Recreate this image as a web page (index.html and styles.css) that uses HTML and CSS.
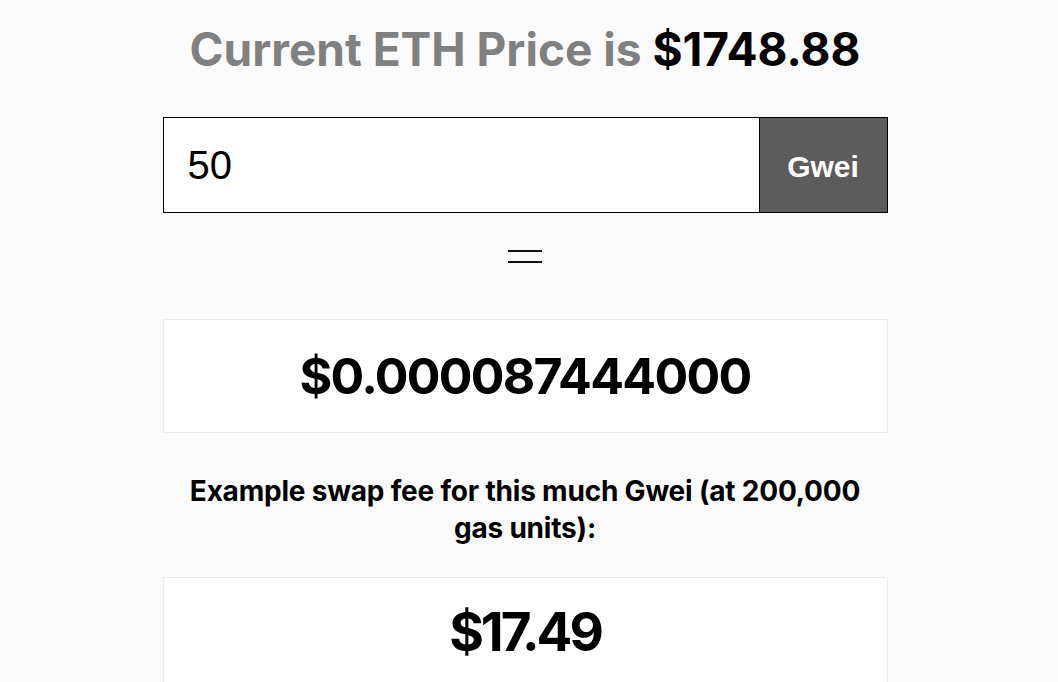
FILE: index.html
```html
<!DOCTYPE html>
<html lang="en">
<head>
    <meta charset="UTF-8">
    <title>Gwei Calculator</title>
    <link rel="stylesheet" href="styles.css">
</head>
<body>

<div class="container">
    <h1 class="title">Current ETH Price is <span class="price">$1748.88</span></h1>

    <form class="gwei-form">
        <input type="text" class="gwei-input" value="50">
        <button type="button" class="unit-button">Gwei</button>
    </form>

    <div class="equals">
        <svg width="34" height="16" viewBox="0 0 34 16">
            <rect x="0" y="1" width="34" height="2" fill="#111"></rect>
            <rect x="0" y="12" width="34" height="2" fill="#111"></rect>
        </svg>
    </div>

    <div class="result-box">
        <div class="result">$0.000087444000</div>
    </div>

    <p class="label">Example swap fee for this much Gwei (at 200,000 gas units):</p>

    <div class="result-box fee-box">
        <div class="result fee">$17.49</div>
    </div>
</div>

</body>
</html>
```

FILE: styles.css
```css
body {
    background-color: #fafafa;
    font-family: Inter, "Liberation Sans", sans-serif;
    margin: 0;
    padding: 0 8px 0 0;
    color: #000;
}

.container {
    width: 725px;
    margin: 0 auto;
    display: flex;
    flex-direction: column;
    align-items: stretch;
}

.title {
    margin: 20px 0 0 0;
    font-size: 46px;
    font-weight: 700;
    color: #808080;
    text-align: center;
    line-height: 58px;
}

.price {
    color: #000;
}

.gwei-form {
    display: flex;
    margin-top: 39px;
    height: 96px;
    border: 1px solid #000;
    box-sizing: border-box;
    background-color: #fff;
}

.gwei-input {
    flex: 1;
    border: none;
    outline: none;
    padding: 0 24px;
    font-family: "Liberation Sans", Arial, sans-serif;
    font-size: 40px;
    color: #000;
    background: #fff;
    min-width: 0;
}

.unit-button {
    width: 128px;
    border: none;
    border-left: 1px solid #000;
    background-color: #5c5c5c;
    color: #fff;
    font-family: "Liberation Sans", Arial, sans-serif;
    font-weight: 700;
    font-size: 30px;
    padding: 4px 0 0 0;
}

.equals {
    display: flex;
    justify-content: center;
    margin-top: 36px;
    height: 15px;
}

.result-box {
    margin-top: 55px;
    background-color: #fff;
    border: 1px solid #ebebeb;
    height: 114px;
    box-sizing: border-box;
    display: flex;
    align-items: center;
    justify-content: center;
}

.result {
    font-size: 50px;
    font-weight: 700;
    letter-spacing: -1.7px;
}

.label {
    margin: 40px 20px 0 20px;
    font-size: 28px;
    font-weight: 700;
    line-height: 37px;
    letter-spacing: -0.2px;
    text-align: center;
}

.fee-box {
    margin-top: 30px;
    height: 120px;
    align-items: flex-start;
    padding-top: 22px;
}

.fee {
    font-size: 53px;
    letter-spacing: -3px;
}
```
